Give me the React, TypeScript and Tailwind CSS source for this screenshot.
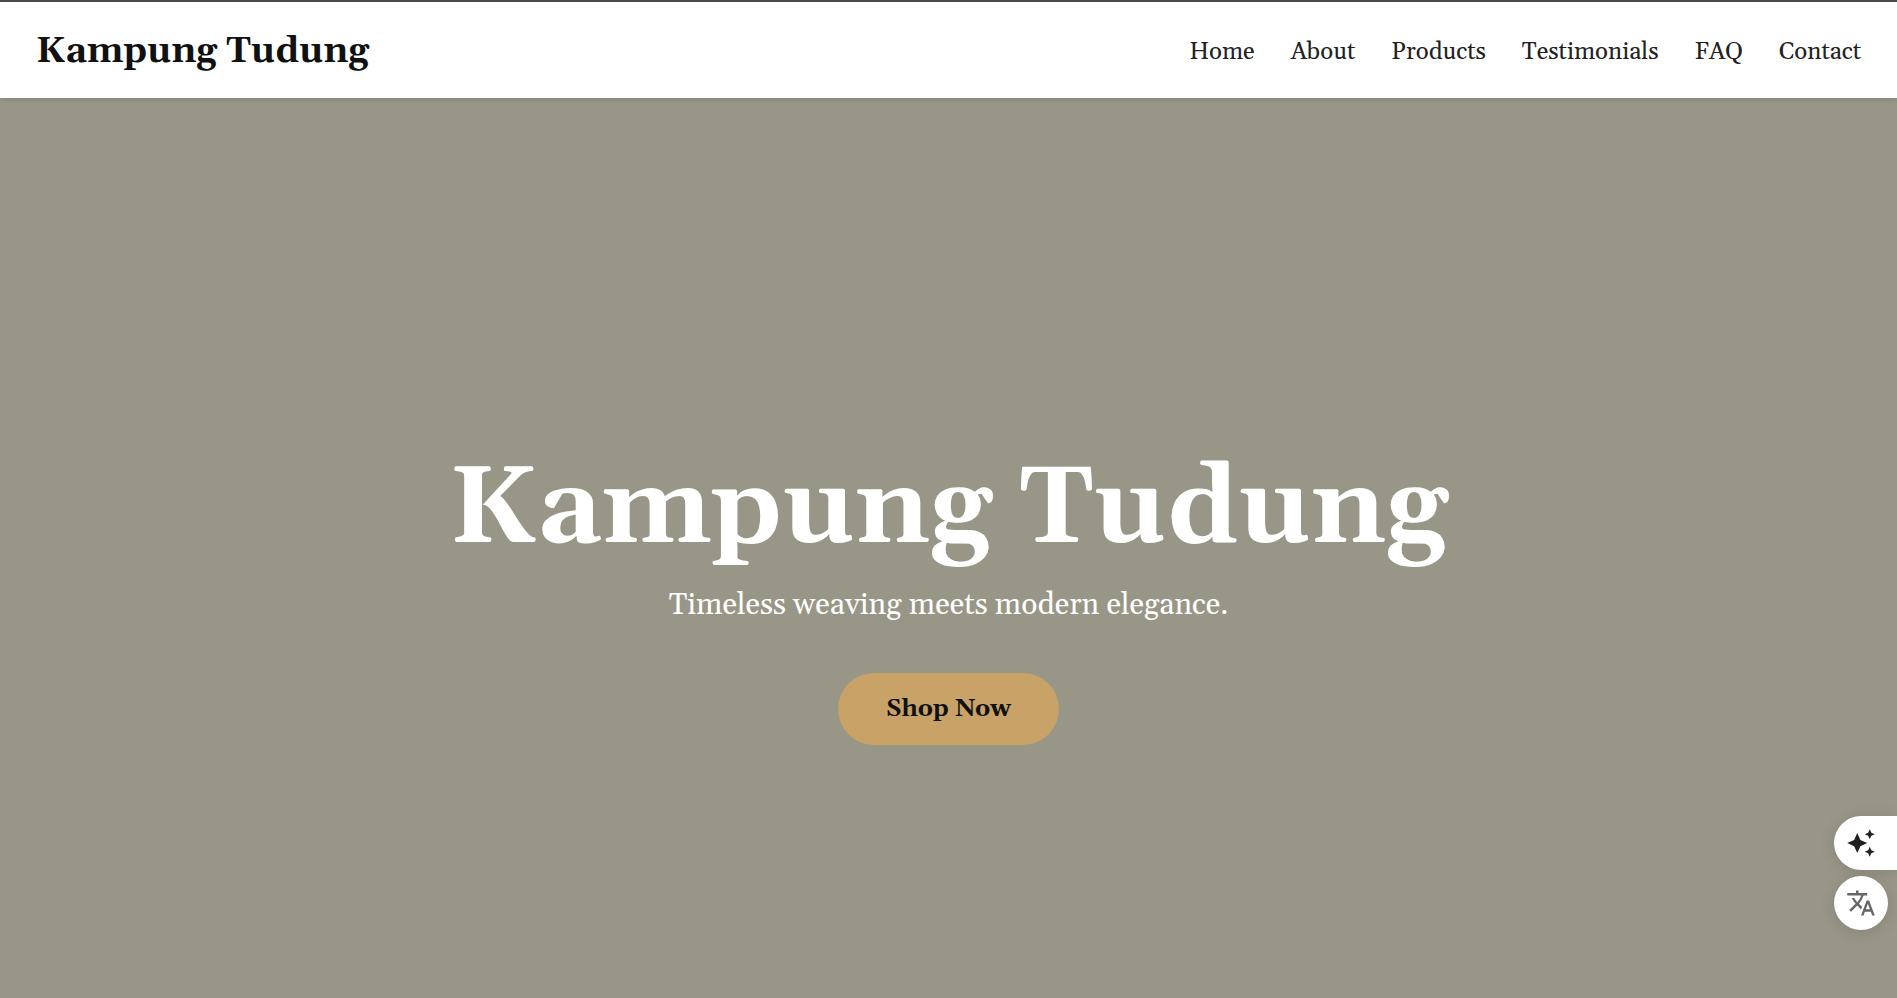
import { MdAutoAwesome, MdTranslate } from "react-icons/md";

const links = ["Home", "About", "Products", "Testimonials", "FAQ", "Contact"];

export default function App() {
  return (
    <div className="flex min-h-screen flex-col bg-[#989686] font-[Georgia,Gelasio,'Liberation_Serif',serif] text-[#111111]">
      <header className="relative z-10 flex flex-wrap items-center justify-between border-t-2 border-[#4c4a4b] bg-white px-9 pt-[26px] pb-[22px] shadow-[0_2px_5px_rgba(0,0,0,0.1)]">
        <a href="#home" className="text-[36px] leading-[48px] font-bold">
          Kampung Tudung
        </a>
        <nav aria-label="Main" className="flex flex-wrap gap-9 text-[24px] leading-[48px] text-[#222222]">
          {links.map((label) => (
            <a key={label} href={`#${label.toLowerCase()}`}>
              {label}
            </a>
          ))}
        </nav>
      </header>

      <main id="home" className="flex flex-1 flex-col items-center justify-center px-9 pt-24 text-center">
        <h1 className="text-[108px] leading-[128px] font-bold text-white">Kampung Tudung</h1>
        <p className="mt-1.5 text-[30px] leading-[48px] text-white">Timeless weaving meets modern elegance.</p>
        <a
          href="#products"
          className="mt-11 rounded-full bg-[#c9a267] px-12 py-3 text-[24px] leading-[48px] font-bold"
        >
          Shop Now
        </a>
      </main>

      <aside aria-label="Page tools" className="fixed right-0 bottom-17 z-20 flex flex-col gap-1.5">
        <button
          type="button"
          aria-label="Assistant"
          className="flex h-[54px] w-[63px] items-center rounded-l-full bg-white pl-3 text-[#202020] shadow-[0_2px_16px_rgba(0,0,0,0.12)]"
        >
          <MdAutoAwesome className="size-[30px]" />
        </button>
        <button
          type="button"
          aria-label="Translate"
          className="flex size-[54px] items-center justify-center rounded-full bg-white text-[#666666] shadow-[0_2px_16px_rgba(0,0,0,0.12)]"
        >
          <MdTranslate className="size-[30px]" />
        </button>
      </aside>
    </div>
  );
}
